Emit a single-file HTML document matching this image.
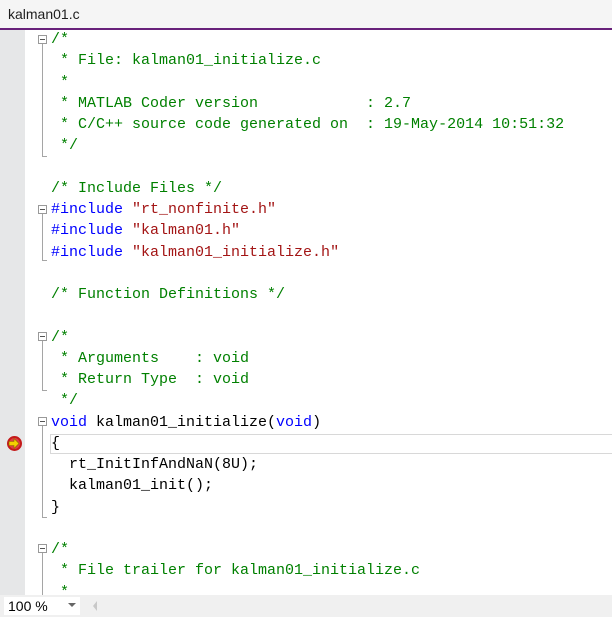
<!DOCTYPE html>
<html><head><style>
body{margin:0;width:612px;height:617px;overflow:hidden;background:#fff;position:relative;font-family:"Liberation Mono",monospace}
#tab{position:absolute;left:0;top:0;width:612px;height:28px;background:#f5f5f5;}
#tab span{position:absolute;left:8px;top:6px;font:14px "Liberation Sans",sans-serif;color:#1e1e1e}
#tl{position:absolute;left:0;top:28px;width:612px;height:2px;background:#68217a}
#gut{position:absolute;left:0;top:30px;width:25px;height:565px;background:#e6e7e8}
#code{position:absolute;left:51px;top:29px;font-size:15px;line-height:21.25px;white-space:pre;color:#000}
.c{color:#008000}.k{color:#0000ff}.s{color:#a31515}
.fb{position:absolute;left:38px;width:9px;height:9px;border:1px solid #999;background:#fff;box-sizing:border-box}
.fb:after{content:"";position:absolute;left:1px;top:3px;width:5px;height:1px;background:#555}
.fl{position:absolute;left:42px;width:1px;background:#a5a5a5}
.ft{position:absolute;left:42px;width:5px;height:1px;background:#a5a5a5}
#cur{position:absolute;left:50px;top:434px;width:570px;height:20px;border:1px solid #d8d8d8;box-sizing:border-box}
#bot{position:absolute;left:0;top:595px;width:612px;height:22px;background:#f0f0f0}
#zoom{position:absolute;left:4px;top:597px;width:76px;height:18px;background:#fff;font:14px "Liberation Sans",sans-serif;}
</style></head><body>
<div id="tab"><span>kalman01.c</span></div><div id="tl"></div>
<div id="gut"></div>
<div id="cur"></div>
<div id="code"><span class="c">/*
 * File: kalman01_initialize.c
 *
 * MATLAB Coder version            : 2.7
 * C/C++ source code generated on  : 19-May-2014 10:51:32
 */</span>

<span class="c">/* Include Files */</span>
<span class="k">#include</span> <span class="s">"rt_nonfinite.h"</span>
<span class="k">#include</span> <span class="s">"kalman01.h"</span>
<span class="k">#include</span> <span class="s">"kalman01_initialize.h"</span>

<span class="c">/* Function Definitions */</span>

<span class="c">/*
 * Arguments    : void
 * Return Type  : void
 */</span>
<span class="k">void</span> kalman01_initialize(<span class="k">void</span>)
{
  rt_InitInfAndNaN(8U);
  kalman01_init();
}

<span class="c">/*
 * File trailer for kalman01_initialize.c
 *</span></div>
<!-- folds -->
<div class="fb" style="top:35px"></div><div class="fl" style="top:44px;height:113px"></div><div class="ft" style="top:156px"></div>
<div class="fb" style="top:205px"></div><div class="fl" style="top:214px;height:47px"></div><div class="ft" style="top:260px"></div>
<div class="fb" style="top:332px"></div><div class="fl" style="top:341px;height:50px"></div><div class="ft" style="top:390px"></div>
<div class="fb" style="top:417px"></div><div class="fl" style="top:426px;height:92px"></div><div class="ft" style="top:517px"></div>
<div class="fb" style="top:544px"></div><div class="fl" style="top:553px;height:42px"></div>
<svg style="position:absolute;left:6px;top:435px" width="17" height="17"><circle cx="8.5" cy="8.5" r="7.5" fill="#c41a1a"/><circle cx="8.5" cy="8.5" r="5.5" fill="#e04040"/><path d="M3 6.5h5v-3l5 5-5 5v-3H3z" fill="#f5d000" stroke="#8a6a00" stroke-width=".6"/></svg>
<div id="bot"></div>
<div id="zoom"><span style="position:absolute;left:4px;top:1px">100 %</span><span style="position:absolute;left:64px;top:6px;border:4px solid transparent;border-top:4px solid #666;width:0;height:0"></span></div>
<div style="position:absolute;left:88px;top:601px;border:5px solid transparent;border-right:4px solid #c8c8c8;width:0;height:0"></div>
</body></html>
